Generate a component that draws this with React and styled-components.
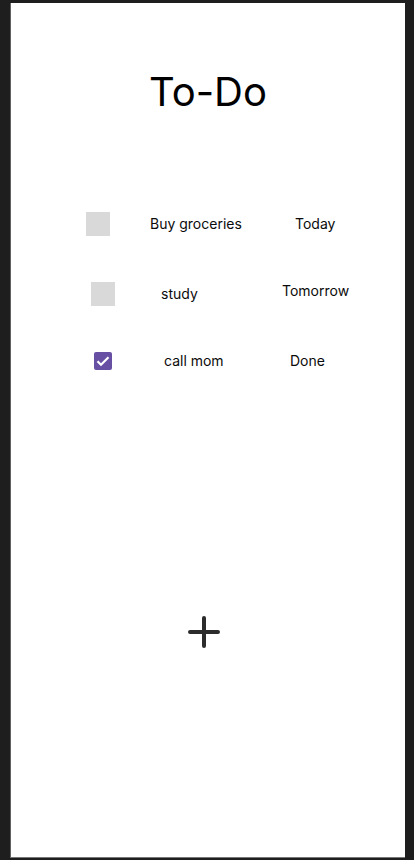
import React, { useState } from "react";
import styled, { createGlobalStyle } from "styled-components";

const GlobalStyle = createGlobalStyle`
  * {
    box-sizing: border-box;
  }
  body {
    margin: 0;
    background: #1e1e1e;
    color: #0b0b0b;
    font-family: Inter, "Liberation Sans", sans-serif;
  }
`;

const Page = styled.div`
  display: flex;
  min-height: 100vh;
  padding: 3px 9px 2px 10px;
`;

const Screen = styled.main`
  flex: 1;
  display: flex;
  flex-direction: column;
  align-items: stretch;
  background: #fff;
  border-left: 1px solid #606260;
  border-bottom: 1px solid #777;
`;

const Title = styled.h1`
  margin: 64px 0 0;
  font-size: 40px;
  line-height: 50px;
  font-weight: 400;
  text-align: center;
  color: #000;
`;

const List = styled.ul`
  display: flex;
  flex-direction: column;
  gap: 46px;
  margin: 95px 0 0;
  padding: 0;
  list-style: none;
`;

const Row = styled.li`
  display: grid;
  grid-template-columns: ${({ $columns }) => $columns};
  align-items: center;
  font-size: 14px;
  line-height: 18px;
  white-space: nowrap;
`;

const CheckCell = styled.span`
  grid-column: 2;
  display: grid;
  justify-content: start;
  align-items: center;

  > * {
    grid-area: 1 / 1;
  }
`;

const Checkbox = styled.input`
  appearance: none;
  width: 24px;
  height: 24px;
  margin: 0;
  background: #d9d9d9;
  cursor: pointer;

  &:checked {
    width: 18px;
    height: 18px;
    border-radius: 2px;
    background: #6750a4;
  }
`;

const CheckMark = styled.svg`
  width: 18px;
  height: 18px;
  pointer-events: none;
`;

const Label = styled.label`
  cursor: pointer;
`;

const Due = styled.span`
  align-self: ${({ $align }) => $align || "center"};
`;

const Actions = styled.footer`
  display: flex;
  justify-content: center;
  padding: 242px 8px 0 0;
`;

const AddButton = styled.button`
  display: flex;
  padding: 0;
  border: 0;
  background: none;
  color: #2c2c2c;
  cursor: pointer;
`;

const initialTasks = [
  { id: "groceries", text: "Buy groceries", due: "Today", done: false, columns: "75fr 64fr 145fr 110fr" },
  { id: "study", text: "study", due: "Tomorrow", dueAlign: "start", done: false, columns: "80fr 70fr 121fr 123fr" },
  { id: "mom", text: "call mom", due: "Done", done: true, columns: "83fr 70fr 126fr 115fr" },
];

function Task({ task, onToggle }) {
  return (
    <Row $columns={task.columns}>
      <CheckCell>
        <Checkbox id={task.id} type="checkbox" checked={task.done} onChange={onToggle} />
        {task.done && (
          <CheckMark viewBox="0 0 18 18" aria-hidden="true">
            <path d="M3.5 9.2 L7 12.7 L14.5 5.2" fill="none" stroke="#fff" strokeWidth="2.2" />
          </CheckMark>
        )}
      </CheckCell>
      <Label htmlFor={task.id}>{task.text}</Label>
      <Due $align={task.dueAlign}>{task.due}</Due>
    </Row>
  );
}

export default function App() {
  const [tasks, setTasks] = useState(initialTasks);
  const toggle = (id) =>
    setTasks((all) => all.map((t) => (t.id === id ? { ...t, done: !t.done } : t)));

  return (
    <>
      <GlobalStyle />
      <Page>
        <Screen>
          <Title>To-Do</Title>
          <List>
            {tasks.map((task) => (
              <Task key={task.id} task={task} onToggle={() => toggle(task.id)} />
            ))}
          </List>
          <Actions>
            <AddButton type="button" aria-label="Add task">
              <svg width="40" height="40" viewBox="0 0 40 40" aria-hidden="true">
                <path d="M20 6 V34 M6 20 H34" fill="none" stroke="currentColor" strokeWidth="4" strokeLinecap="round" />
              </svg>
            </AddButton>
          </Actions>
        </Screen>
      </Page>
    </>
  );
}
